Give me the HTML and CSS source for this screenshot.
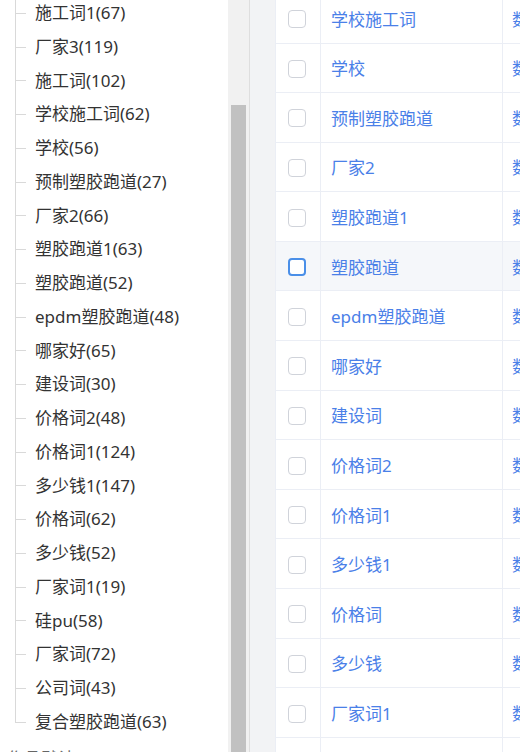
FILE: index.html
```html
<!DOCTYPE html>
<html lang="zh-CN">
<head>
    <meta charset="UTF-8">
    <meta name="viewport" content="width=device-width, initial-scale=1.0">
    <title>关键词分组</title>
    <link rel="stylesheet" href="styles.css">
</head>
<body>
    <div class="page">
        <div class="tree-pane">
            <ul class="tree">
                <li class="tree-node">施工词1(67)</li>
                <li class="tree-node">厂家3(119)</li>
                <li class="tree-node">施工词(102)</li>
                <li class="tree-node">学校施工词(62)</li>
                <li class="tree-node">学校(56)</li>
                <li class="tree-node">预制塑胶跑道(27)</li>
                <li class="tree-node">厂家2(66)</li>
                <li class="tree-node">塑胶跑道1(63)</li>
                <li class="tree-node">塑胶跑道(52)</li>
                <li class="tree-node">epdm塑胶跑道(48)</li>
                <li class="tree-node">哪家好(65)</li>
                <li class="tree-node">建设词(30)</li>
                <li class="tree-node">价格词2(48)</li>
                <li class="tree-node">价格词1(124)</li>
                <li class="tree-node">多少钱1(147)</li>
                <li class="tree-node">价格词(62)</li>
                <li class="tree-node">多少钱(52)</li>
                <li class="tree-node">厂家词1(19)</li>
                <li class="tree-node">硅pu(58)</li>
                <li class="tree-node">厂家词(72)</li>
                <li class="tree-node">公司词(43)</li>
                <li class="tree-node">复合塑胶跑道(63)</li>
            </ul>
            <div class="tree-parent">作品默认(0)</div>
        </div>

        <div class="scrollbar">
            <div class="scrollbar-thumb"></div>
        </div>

        <div class="gutter"></div>

        <div class="table-pane">
            <div class="table">
                <div class="row"><div class="cell check"><span class="checkbox"></span></div><div class="cell name">学校施工词</div><div class="cell type">数据</div></div>
                <div class="row"><div class="cell check"><span class="checkbox"></span></div><div class="cell name">学校</div><div class="cell type">数据</div></div>
                <div class="row"><div class="cell check"><span class="checkbox"></span></div><div class="cell name">预制塑胶跑道</div><div class="cell type">数据</div></div>
                <div class="row"><div class="cell check"><span class="checkbox"></span></div><div class="cell name">厂家2</div><div class="cell type">数据</div></div>
                <div class="row"><div class="cell check"><span class="checkbox"></span></div><div class="cell name">塑胶跑道1</div><div class="cell type">数据</div></div>
                <div class="row hover"><div class="cell check"><span class="checkbox"></span></div><div class="cell name">塑胶跑道</div><div class="cell type">数据</div></div>
                <div class="row"><div class="cell check"><span class="checkbox"></span></div><div class="cell name">epdm塑胶跑道</div><div class="cell type">数据</div></div>
                <div class="row"><div class="cell check"><span class="checkbox"></span></div><div class="cell name">哪家好</div><div class="cell type">数据</div></div>
                <div class="row"><div class="cell check"><span class="checkbox"></span></div><div class="cell name">建设词</div><div class="cell type">数据</div></div>
                <div class="row"><div class="cell check"><span class="checkbox"></span></div><div class="cell name">价格词2</div><div class="cell type">数据</div></div>
                <div class="row"><div class="cell check"><span class="checkbox"></span></div><div class="cell name">价格词1</div><div class="cell type">数据</div></div>
                <div class="row"><div class="cell check"><span class="checkbox"></span></div><div class="cell name">多少钱1</div><div class="cell type">数据</div></div>
                <div class="row"><div class="cell check"><span class="checkbox"></span></div><div class="cell name">价格词</div><div class="cell type">数据</div></div>
                <div class="row"><div class="cell check"><span class="checkbox"></span></div><div class="cell name">多少钱</div><div class="cell type">数据</div></div>
                <div class="row"><div class="cell check"><span class="checkbox"></span></div><div class="cell name">厂家词1</div><div class="cell type">数据</div></div>
                <div class="row"><div class="cell check"><span class="checkbox"></span></div><div class="cell name">厂家词</div><div class="cell type">数据</div></div>
            </div>
        </div>
    </div>
</body>
</html>
```

FILE: styles.css
```css
body {
    margin: 0;
    font-family: "Noto Sans", "Noto Sans CJK SC", sans-serif;
    font-size: 17px;
    color: #333333;
    background-color: #ffffff;
    overflow: hidden;
}

.page {
    display: flex;
    width: 520px;
    height: 752px;
    overflow: hidden;
}

/* left tree */
.tree-pane {
    width: 228px;
    flex-shrink: 0;
    background-color: #ffffff;
    overflow: hidden;
}

.tree {
    list-style: none;
    margin: -3.9px 0 0 0;
    padding: 0;
}

.tree-node {
    position: relative;
    height: 33.76px;
    line-height: 33.76px;
    padding-left: 35px;
    white-space: nowrap;
}

.tree-node::before {
    content: "";
    position: absolute;
    left: 15px;
    top: 0;
    bottom: 0;
    width: 1px;
    background-color: #d9d9d9;
}

.tree-node:last-child::before {
    bottom: 50%;
}

.tree-node::after {
    content: "";
    position: absolute;
    left: 15px;
    top: 50%;
    width: 11px;
    height: 1px;
    background-color: #d9d9d9;
}

.tree-parent {
    height: 33.76px;
    line-height: 33.76px;
    padding-left: 7px;
    padding-top: 3px;
    color: #666666;
    white-space: nowrap;
}

/* fake scrollbar */
.scrollbar {
    width: 22px;
    flex-shrink: 0;
    background-color: #f1f1f1;
    border-right: 1px solid #dedede;
    padding: 105px 3px 0 3px;
    box-sizing: border-box;
}

.scrollbar-thumb {
    height: 100%;
    background-color: #c1c1c1;
}

.gutter {
    width: 25px;
    flex-shrink: 0;
    background-color: #f2f3f5;
}

/* right table */
.table-pane {
    flex: 1;
    background-color: #ffffff;
    border-left: 1px solid #ebeef5;
    overflow: hidden;
}

.table {
    margin-top: -6.1px;
    width: 300px;
}

.row {
    display: grid;
    grid-template-columns: 45px 182px 1fr;
    height: 49.6px;
    box-sizing: border-box;
    border-bottom: 1px solid #ebeef5;
}

.row.hover {
    background-color: #f5f7fa;
}

.cell {
    display: flex;
    align-items: center;
    white-space: nowrap;
    overflow: hidden;
}

.cell.check {
    justify-content: center;
    border-right: 1px solid #ebeef5;
    padding-top: 2px;
    padding-right: 2px;
    box-sizing: border-box;
}

.cell.name {
    padding-left: 10px;
    color: #4a80e8;
    border-right: 1px solid #ebeef5;
}

.cell.type {
    padding-left: 9px;
    color: #4a80e8;
}

.checkbox {
    width: 18px;
    height: 18px;
    box-sizing: border-box;
    border: 1px solid #d0d3da;
    border-radius: 4px;
    background-color: #ffffff;
}

.row.hover .checkbox {
    border: 2px solid #4a8fe8;
    border-radius: 4px;
}
```
